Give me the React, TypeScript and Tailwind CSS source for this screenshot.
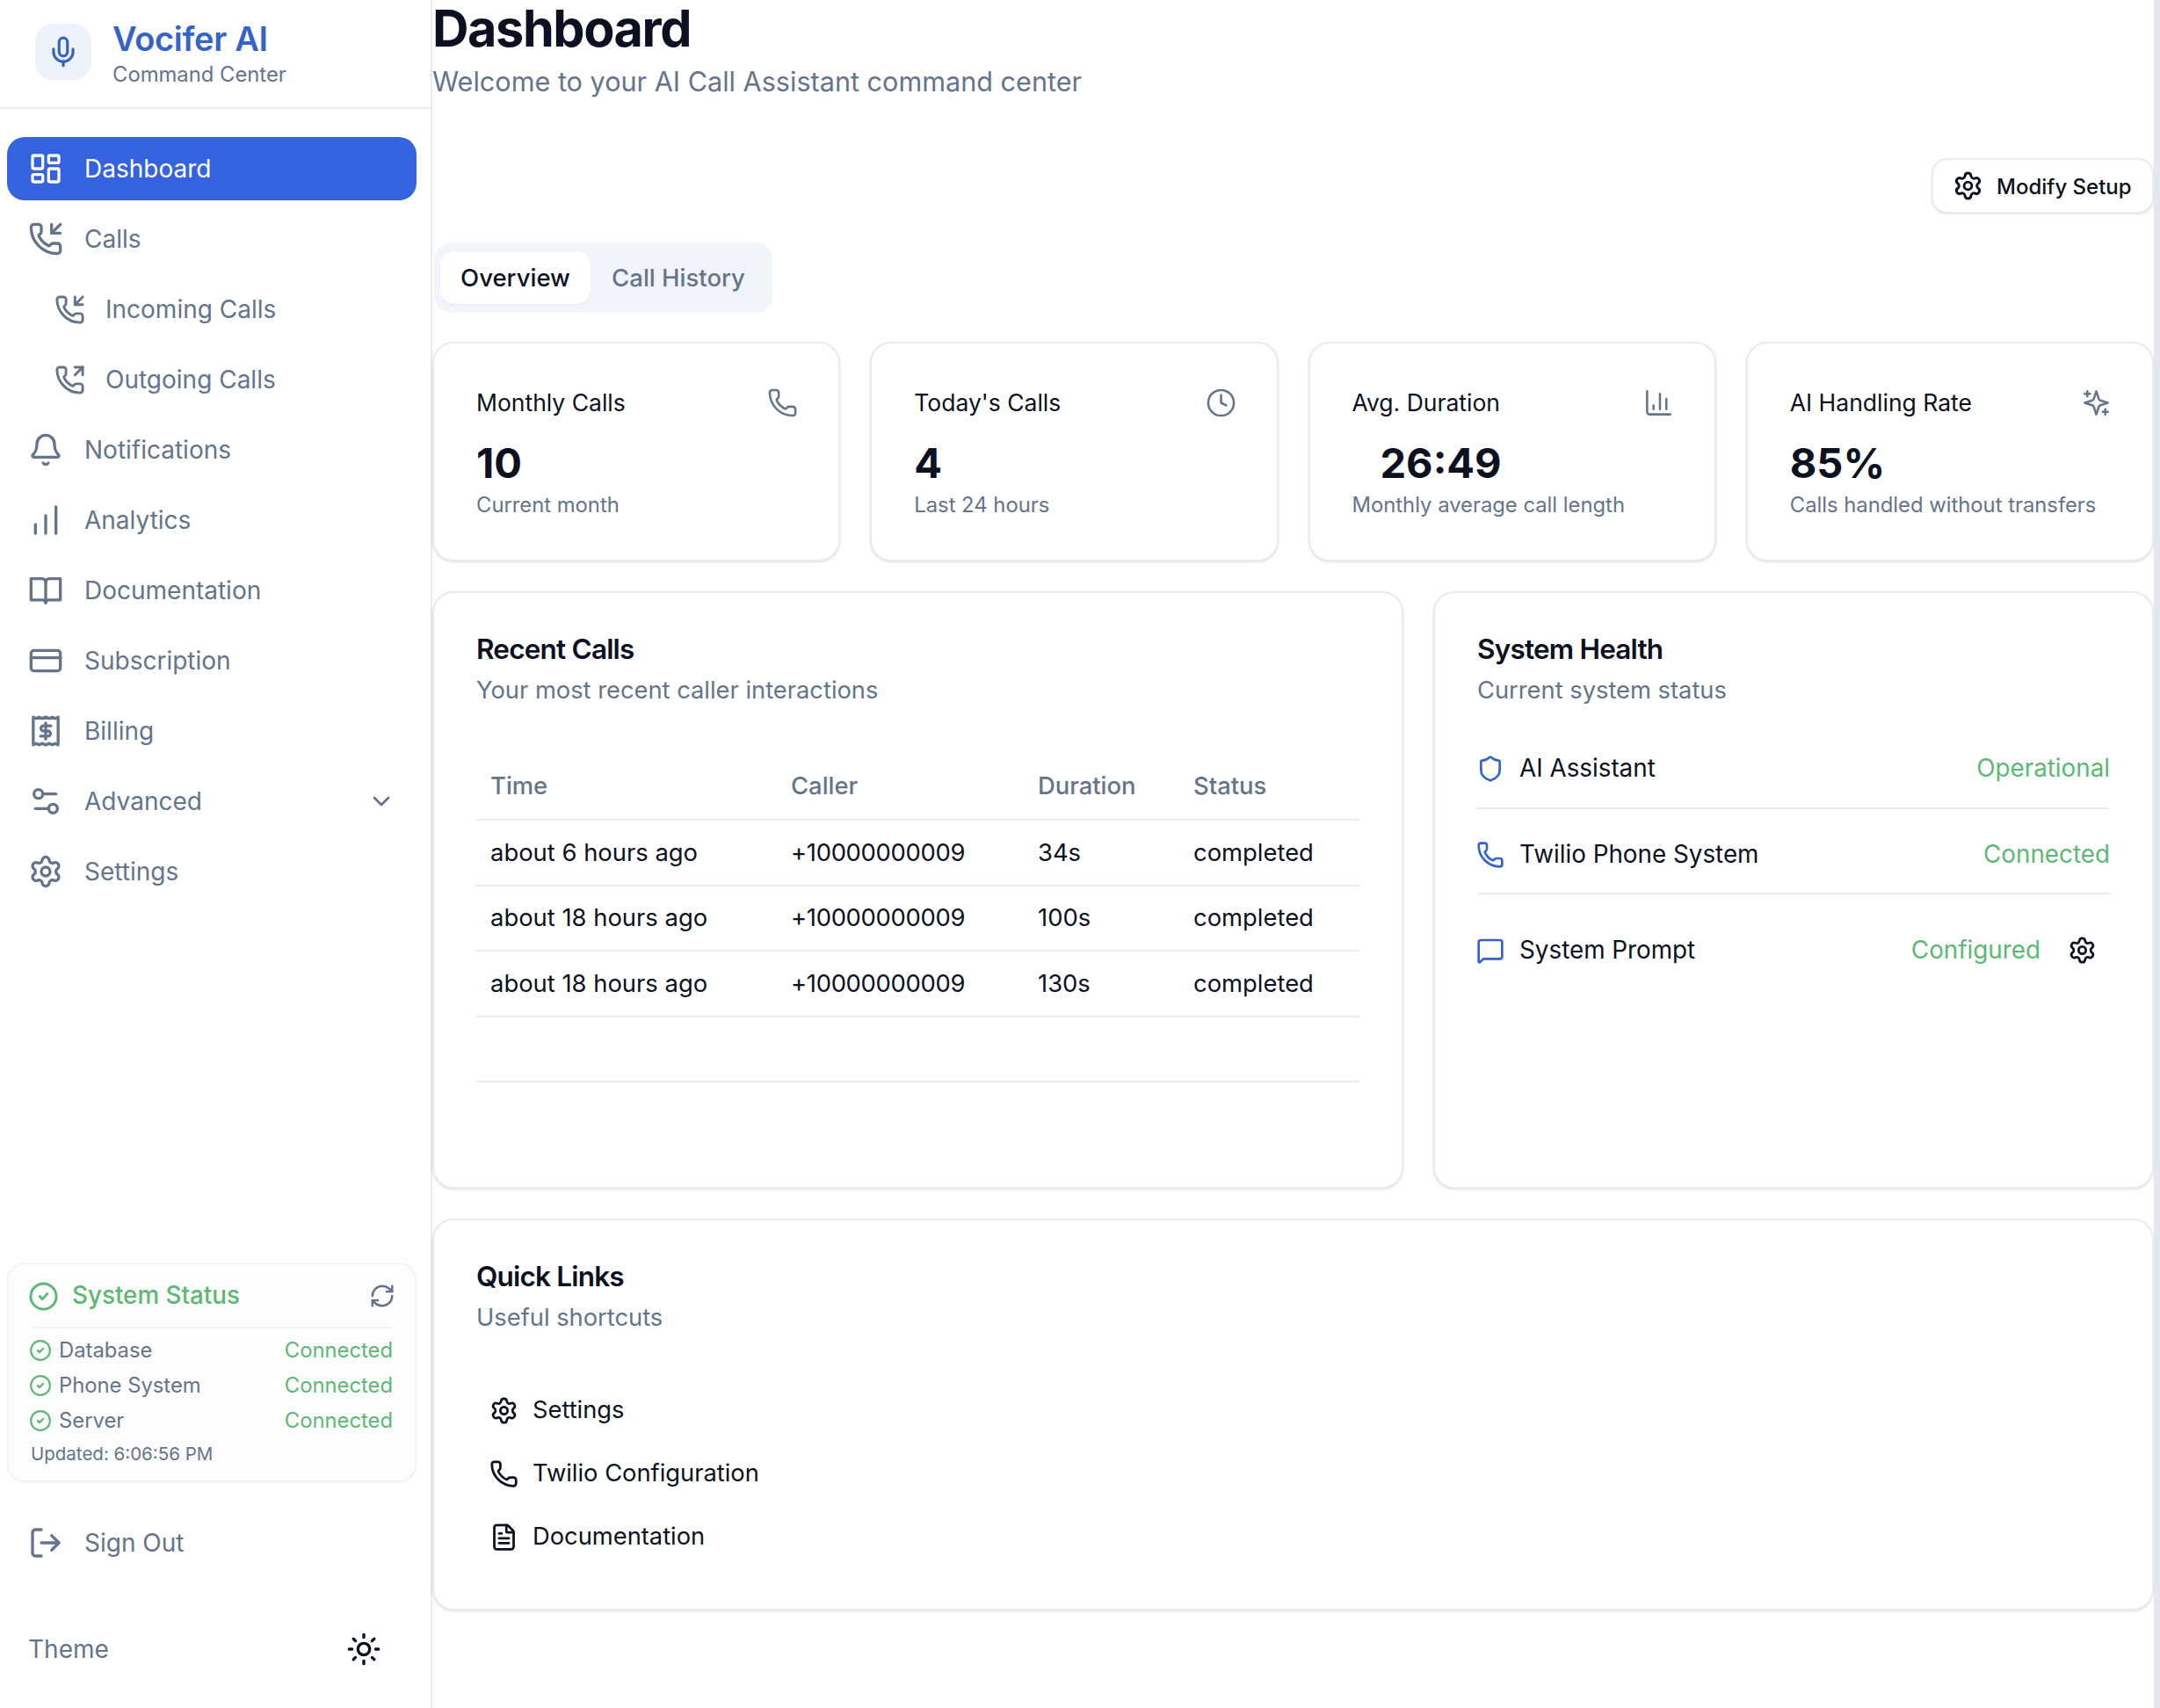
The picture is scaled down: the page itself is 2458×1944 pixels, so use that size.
import React from "react";
import { Mic, LayoutDashboard, PhoneIncoming, PhoneOutgoing, Bell, ChartNoAxesColumnIncreasing, CreditCard, Settings2, Settings, ChevronDown, CircleCheck, RefreshCw, LogOut, Sun, Phone, Clock, ChartColumn, Shield, MessageSquare, FileText } from "lucide-react";

const ReceiptIcon = ({ className }: { className?: string }) => (
  <svg viewBox="0 0 24 24" fill="none" stroke="currentColor" strokeWidth={2} strokeLinecap="round" strokeLinejoin="round" className={className}>
    <path d="M3.5 2.5 5.5 3.5 7.5 2.5 9.5 3.5 12 2.5 14.5 3.5 16.5 2.5 18.5 3.5 20.5 2.5V21.5L18.5 20.5 16.5 21.5 14.5 20.5 12 21.5 9.5 20.5 7.5 21.5 5.5 20.5 3.5 21.5Z" />
    <path d="M15.5 8.5H10.5a1.75 1.75 0 0 0 0 3.5h3a1.75 1.75 0 0 1 0 3.5H8.5" />
    <path d="M12 6.5v11" />
  </svg>
);

const BookIcon = ({ className }: { className?: string }) => (
  <svg viewBox="0 0 24 24" fill="none" stroke="currentColor" strokeWidth={2} strokeLinecap="round" strokeLinejoin="round" className={className}>
    <path d="M2 4h7.5c1.4 0 2.5 1 2.5 2.4C12 5 13.1 4 14.5 4H22v14.5h-8c-1 0-2 .7-2 2-.0-1.3-1-2-2-2H2z" />
    <path d="M12 6.4v14" />
  </svg>
);

const SparkIcon = ({ className }: { className?: string }) => (
  <svg viewBox="0 0 24 24" fill="none" stroke="currentColor" strokeWidth={1.75} strokeLinecap="round" strokeLinejoin="round" className={className}>
    <path d="m12 3-1.912 5.813a2 2 0 0 1-1.275 1.275L3 12l5.813 1.912a2 2 0 0 1 1.275 1.275L12 21l1.912-5.813a2 2 0 0 1 1.275-1.275L21 12l-5.813-1.912a2 2 0 0 1-1.275-1.275L12 3Z" />
    <path d="M5 3v4" />
    <path d="M19 17v4" />
    <path d="M3 5h4" />
    <path d="M17 19h4" />
  </svg>
);

const NavItem = ({ icon: Icon, label, active, sub, chevron }: { icon: any; label: string; active?: boolean; sub?: boolean; chevron?: boolean }) => (
  <div className={`flex h-[72px] items-center rounded-[20px] ${sub ? "pl-[54px]" : "pl-[24px]"} pr-[24px] ${active ? "bg-[#3563e0] text-white" : "text-[#64748b]"}`}>
    <Icon className={`${sub ? "mr-[23px] h-[35px] w-[35px]" : "mr-[24px] h-[40px] w-[40px]"} shrink-0`} strokeWidth={2} />
    <span className="text-[28px] leading-none">{label}</span>
    {chevron && <ChevronDown className="ml-auto h-[32px] w-[32px]" strokeWidth={2} />}
  </div>
);

const StatusRow = ({ label }: { label: string }) => (
  <div className="flex h-[40px] items-center text-[23.8px]">
    <CircleCheck className="-ml-[2px] mr-[8px] h-[26px] w-[26px] text-[#5cb874]" strokeWidth={2} />
    <span className="text-[#64748b]">{label}</span>
    <span className="ml-auto text-[#5cb874]">Connected</span>
  </div>
);

const StatCard = ({ title, icon: Icon, value, sub, indent }: { title: string; icon: any; value: string; sub: string; indent?: boolean }) => (
  <div className="h-[250px] flex-1 rounded-[24px] border-2 border-[#e8ebf0] bg-white px-[48px] pt-[50px] shadow-sm">
    <div className="flex h-[36px] items-center justify-between text-[#0b1120]">
      <span className="text-[26.5px] leading-none">{title}</span>
      <Icon className="-mr-[2px] h-[35px] w-[35px] text-[#64748b]" strokeWidth={1.75} />
    </div>
    <div className={`mt-[30.5px] h-[40px] text-[47px] font-bold leading-[40px] text-[#0b1120] ${indent ? "pl-[32px]" : ""}`}>{value}</div>
    <div className="mt-[13px] whitespace-nowrap text-[23.8px] leading-[30px] text-[#64748b]">{sub}</div>
  </div>
);

const CardHead = ({ title, sub }: { title: string; sub: string }) => (
  <div>
    <div className="text-[31.5px] font-semibold leading-[40px] tracking-[-0.8px] text-[#0b1120]">{title}</div>
    <div className="mt-[7.5px] text-[27.3px] leading-[40px] text-[#64748b]">{sub}</div>
  </div>
);

const Health = ({ icon: Icon, label, value, gear, border, h }: { icon: any; label: string; value: string; gear?: boolean; border?: boolean; h: string }) => (
  <div className={`flex items-center ${h} ${border ? "border-b-2 border-[#e8ebf0]" : ""}`}>
    <Icon className="-ml-[1px] mr-[17px] h-[32px] w-[32px] text-[#3563c9]" strokeWidth={2} />
    <span className="text-[27.8px] text-[#0b1120]">{label}</span>
    <span className="ml-auto text-[27.8px] text-[#5cb874]">{value}</span>
    {gear && <Settings className="ml-[31px] mr-[15px] h-[33px] w-[33px] text-[#0b1120]" strokeWidth={2} />}
  </div>
);

const QuickLink = ({ icon: Icon, label }: { icon: any; label: string }) => (
  <div className="flex h-[72px] items-center pl-[15px] text-[#0b1120]">
    <Icon className="mr-[16px] h-[33px] w-[33px]" strokeWidth={2} />
    <span className="text-[27.3px]">{label}</span>
  </div>
);

const rows = [
  ["about 6 hours ago", "34s"],
  ["about 18 hours ago", "100s"],
  ["about 18 hours ago", "130s"],
];

export default function App() {
  return (
    <div className="flex h-[1944px] w-[2458px] overflow-hidden bg-white font-['Inter',sans-serif]">
      <aside className="flex h-full w-[492px] shrink-0 flex-col border-r-2 border-[#e8ebf0]">
        <div className="flex h-[124px] items-center border-b-2 border-[#e8ebf0] pl-[40px] pb-[4px]">
          <div className="flex h-[64px] w-[64px] items-center justify-center rounded-[20px] bg-[#eef2fb]">
            <Mic className="h-[38px] w-[38px] text-[#3563c9]" strokeWidth={2} />
          </div>
          <div className="ml-[24px] pt-[3px]">
            <div className="text-[38px] font-semibold leading-[44px] tracking-[-0.3px] text-[#3563c9]">Vocifer AI</div>
            <div className="mt-[4px] text-[23.8px] leading-[30px] text-[#64748b]">Command Center</div>
          </div>
        </div>
        <nav className="ml-[8px] mt-[32px] flex w-[466px] flex-col gap-[8px]">
          <NavItem icon={LayoutDashboard} label="Dashboard" active />
          <NavItem icon={PhoneIncoming} label="Calls" />
          <NavItem icon={PhoneIncoming} label="Incoming Calls" sub />
          <NavItem icon={PhoneOutgoing} label="Outgoing Calls" sub />
          <NavItem icon={Bell} label="Notifications" />
          <NavItem icon={ChartNoAxesColumnIncreasing} label="Analytics" />
          <NavItem icon={BookIcon} label="Documentation" />
          <NavItem icon={CreditCard} label="Subscription" />
          <NavItem icon={ReceiptIcon} label="Billing" />
          <NavItem icon={Settings2} label="Advanced" chevron />
          <NavItem icon={Settings} label="Settings" />
        </nav>
        <div className="ml-[8px] mt-[409px] h-[250px] w-[466px] rounded-[20px] border-2 border-[#f3f4f6] bg-[#fefdfe] px-[25px] pt-[16px] shadow-xs">
          <div className="flex h-[40px] items-center">
            <CircleCheck className="-ml-[3px] mr-[15px] h-[35px] w-[35px] text-[#5cb874]" strokeWidth={2} />
            <span className="text-[27.8px] font-medium text-[#5cb874]">System Status</span>
            <RefreshCw className="-mr-[3px] ml-auto h-[30px] w-[30px] text-[#64748b]" strokeWidth={2} />
          </div>
          <div className="mb-[5px] mt-[15px] border-t-2 border-[#f3f4f6]" />
          <StatusRow label="Database" />
          <StatusRow label="Phone System" />
          <StatusRow label="Server" />
          <div className="mt-[4px] text-[20.5px] leading-[28px] text-[#64748b]">Updated: 6:06:56 PM</div>
        </div>
        <div className="ml-[8px] mt-[33px] w-[466px]">
          <NavItem icon={LogOut} label="Sign Out" />
        </div>
        <div className="mt-[49px] flex h-[72px] items-center pl-[32px] pr-[56px]">
          <span className="text-[28px] text-[#64748b]">Theme</span>
          <Sun className="ml-auto h-[40px] w-[40px] text-[#0b1120]" strokeWidth={2} />
        </div>
      </aside>
      <main className="flex w-[1959px] shrink-0 flex-col">
        <h1 className="mt-[2px] text-[57.5px] font-bold leading-[60px] tracking-[-1.4px] text-[#0b1120]">Dashboard</h1>
        <p className="mt-[11px] text-[30.6px] leading-[40px] text-[#64748b]">Welcome to your AI Call Assistant command center</p>
        <div className="mt-[67px] flex justify-end">
          <div className="flex h-[63px] w-[253px] items-center rounded-[18px] border-2 border-[#e8ebf0] bg-white pl-[22px] shadow-sm">
            <Settings className="mr-[15px] h-[35px] w-[35px] text-[#0b1120]" strokeWidth={2} />
            <span className="pt-[2px] text-[24px] font-medium text-[#0b1120]">Modify Setup</span>
          </div>
        </div>
        <div className="ml-[2px] mt-[32.5px] flex h-[80px] w-[385px] items-center rounded-[20px] bg-[#f1f5f9] px-[7px]">
          <div className="flex h-[60px] w-[171px] items-center justify-center rounded-[16px] bg-white pt-[2px] text-[27.5px] font-medium text-[#0b1120] shadow-xs">Overview</div>
          <div className="flex h-[60px] flex-1 items-center justify-center pt-[2px] text-[27.5px] font-medium text-[#64748b]">Call History</div>
        </div>
        <div className="mt-[33px] flex gap-[34px]">
          <StatCard title="Monthly Calls" icon={Phone} value="10" sub="Current month" />
          <StatCard title="Today's Calls" icon={Clock} value="4" sub="Last 24 hours" />
          <StatCard title="Avg. Duration" icon={ChartColumn} value="26:49" sub="Monthly average call length" indent />
          <StatCard title="AI Handling Rate" icon={SparkIcon} value="85%" sub="Calls handled without transfers" />
        </div>
        <div className="mt-[34px] flex h-[680px] gap-[34px]">
          <section className="w-[1105px] rounded-[24px] border-2 border-[#e8ebf0] bg-white px-[48px] pt-[44px] shadow-sm">
            <CardHead title="Recent Calls" sub="Your most recent caller interactions" />
            <table className="mt-[51px] w-full table-fixed border-collapse text-left text-[27.4px]">
              <colgroup>
                <col className="w-[342px]" />
                <col className="w-[281px]" />
                <col className="w-[177px]" />
                <col />
              </colgroup>
              <thead>
                <tr className="h-[76px] border-b-2 border-[#e8ebf0] text-[#64748b]">
                  <th className="pl-[16px] font-medium">Time</th>
                  <th className="pl-[16px] font-medium">Caller</th>
                  <th className="pl-[16px] font-medium">Duration</th>
                  <th className="pl-[16px] font-medium">Status</th>
                </tr>
              </thead>
              <tbody className="text-[#0b1120]">
                {rows.map((r, i) => (
                  <tr key={i} className="h-[74.5px] border-b-2 border-[#e8ebf0]">
                    <td className="pl-[16px]">{r[0]}</td>
                    <td className="pl-[16px] tracking-[-0.3px]">+10000000009</td>
                    <td className="pl-[16px]">{r[1]}</td>
                    <td className="pl-[16px]">completed</td>
                  </tr>
                ))}
                <tr className="h-[74px] border-b-2 border-[#e8ebf0]">
                  <td colSpan={4} />
                </tr>
              </tbody>
            </table>
          </section>
          <section className="flex-1 rounded-[24px] border-2 border-[#e8ebf0] bg-white px-[48px] pt-[44px] shadow-sm">
            <CardHead title="System Health" sub="Current system status" />
            <div className="mt-[24.5px]">
              <Health icon={Shield} label="AI Assistant" value="Operational" border h="h-[90px]" />
              <Health icon={Phone} label="Twilio Phone System" value="Connected" border h="h-[97px] pt-[10px]" />
              <Health icon={MessageSquare} label="System Prompt" value="Configured" gear h="h-[128px]" />
            </div>
          </section>
        </div>
        <section className="mt-[34px] h-[446px] rounded-[24px] border-2 border-[#e8ebf0] bg-white px-[48px] pt-[44px] shadow-sm">
          <CardHead title="Quick Links" sub="Useful shortcuts" />
          <div className="mt-[49px]">
            <QuickLink icon={Settings} label="Settings" />
            <QuickLink icon={Phone} label="Twilio Configuration" />
            <QuickLink icon={FileText} label="Documentation" />
          </div>
        </section>
      </main>
      <div className="h-full w-[7px] shrink-0 bg-[#e5e7eb]" />
    </div>
  );
}
